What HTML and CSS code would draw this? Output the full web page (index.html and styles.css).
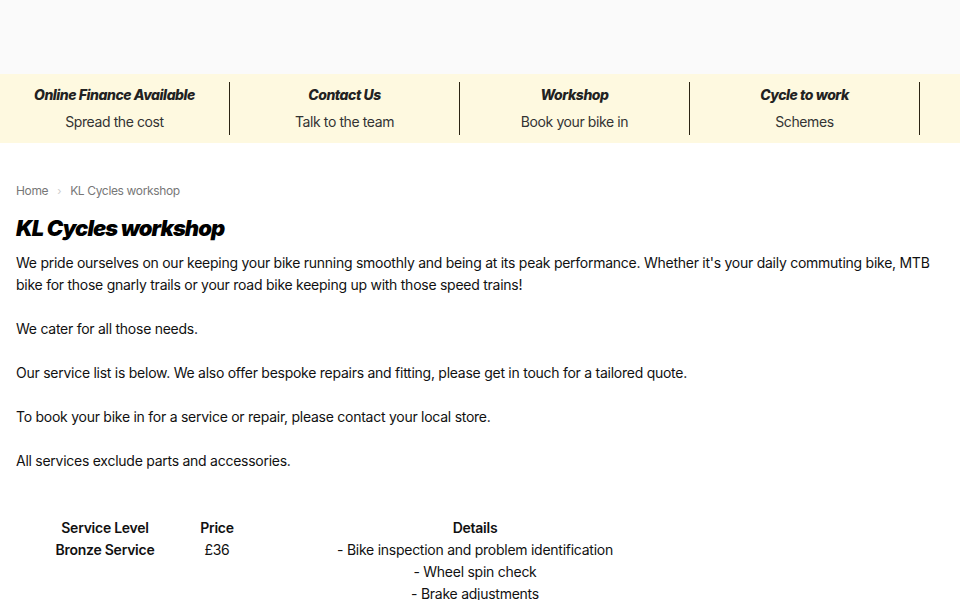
FILE: index.html
```html
<!DOCTYPE html>
<html lang="en">
<head>
<meta charset="utf-8">
<title>KL Cycles workshop</title>
<link rel="stylesheet" href="styles.css">
</head>
<body>
<header class="site-header"></header>
<section class="usp-bar">
  <div class="usp"><div class="usp-title">Online Finance Available</div><div class="usp-sub">Spread the cost</div></div>
  <div class="usp"><div class="usp-title">Contact Us</div><div class="usp-sub">Talk to the team</div></div>
  <div class="usp"><div class="usp-title">Workshop</div><div class="usp-sub">Book your bike in</div></div>
  <div class="usp"><div class="usp-title">Cycle to work</div><div class="usp-sub">Schemes</div></div>
</section>
<main class="content">
  <nav class="breadcrumb"><a href="#">Home</a><span class="sep">›</span><span>KL Cycles workshop</span></nav>
  <h1 class="page-title">KL Cycles workshop</h1>
  <p>We pride ourselves on our keeping your bike running smoothly and being at its peak performance. Whether it's your daily commuting bike, MTB bike for those gnarly trails or your road bike keeping up with those speed trains!</p>
  <p>We cater for all those needs.</p>
  <p>Our service list is below. We also offer bespoke repairs and fitting, please get in touch for a tailored quote.</p>
  <p>To book your bike in for a service or repair, please contact your local store.</p>
  <p>All services exclude parts and accessories.</p>
  <table class="services">
    <thead>
      <tr><th class="c-level">Service Level</th><th class="c-price">Price</th><th class="c-details">Details</th></tr>
    </thead>
    <tbody>
      <tr><th>Bronze Service</th><td>£36</td><td>- Bike inspection and problem identification<br>- Wheel spin check<br>- Brake adjustments<br>- Gear adjustments</td></tr>
    </tbody>
  </table>
</main>
</body>
</html>
```
FILE: styles.css
```css
* { box-sizing: border-box; }
html, body { margin: 0; padding: 0; }
body {
  font-family: Inter, "Liberation Sans", sans-serif;
  color: #111;
  background: #fff;
  font-size: 14px;
  letter-spacing: -0.26px;
}
.site-header {
  height: 74px;
  background: #fafafa;
}
.usp-bar {
  display: flex;
  background: #fef9e0;
  padding: 8px 0;
  height: 69px;
}
.usp {
  width: 230px;
  border-right: 1px solid #2b2413;
  text-align: center;
  display: flex;
  flex-direction: column;
  justify-content: center;
  gap: 10px;
}
.usp-title {
  font-weight: 800;
  font-style: italic;
  font-size: 14px;
  color: #222;
  letter-spacing: -0.45px;
  margin-top: -1px;
}
.usp-sub {
  font-size: 14px;
  color: #333;
  letter-spacing: -0.4px;
}
.content {
  padding: 40px 16px 0;
}
.breadcrumb {
  font-size: 12px;
  color: #777;
  display: flex;
  align-items: center;
  gap: 9px;
  letter-spacing: -0.35px;
}
.breadcrumb a { color: #777; text-decoration: none; }
.breadcrumb .sep { color: #ccc; font-size: 11px; }
.page-title {
  font-size: 22px;
  font-weight: 900;
  font-style: italic;
  margin: 16px 0 10px;
  letter-spacing: -0.95px;
  line-height: 28px;
  color: #000;
}
p {
  margin: 0 0 22px;
  line-height: 22px;
  font-size: 14px;
}
.services {
  margin: 45px 0 0 24px;
  border-collapse: collapse;
  table-layout: fixed;
  text-align: center;
  font-size: 14px;
}
.services th, .services td {
  padding: 0;
  line-height: 22px;
  vertical-align: top;
}
.services th { font-weight: 600; }
.c-level { width: 130px; }
.c-price { width: 94px; }
.c-details { width: 422px; }
```
